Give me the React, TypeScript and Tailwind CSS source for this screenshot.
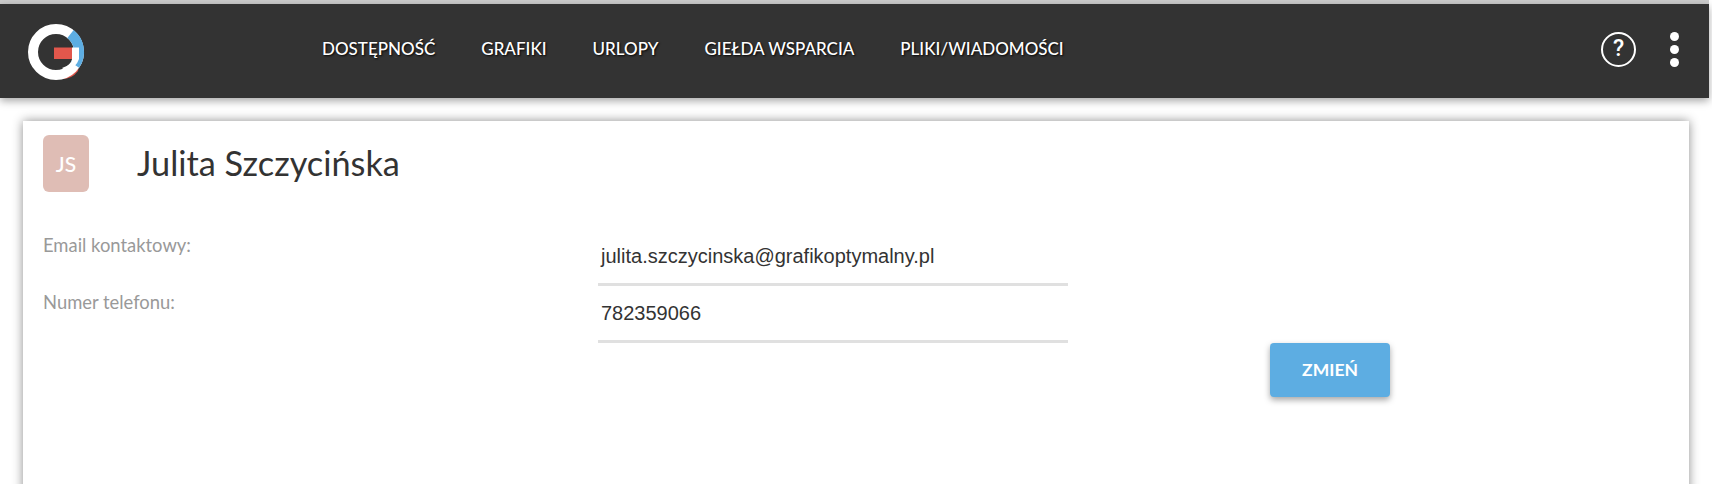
const navItems = ["DOSTĘPNOŚĆ", "GRAFIKI", "URLOPY", "GIEŁDA WSPARCIA", "PLIKI/WIADOMOŚCI"];

function Logo() {
  return (
    <svg width="60" height="60" viewBox="0 0 60 60" className="shrink-0">
      <path d="M36 58 Q46 58 52 50 L53 44 L38 50 Z" fill="#e2574c" />
      <circle cx="30" cy="31" r="23" fill="none" stroke="#fff" strokeWidth="10" />
      <path d="M44.5 13 A23 23 0 0 1 49 44" fill="none" stroke="#5dade2" strokeWidth="10" />
      <path d="M28 26.5 H46 V38 H28 Z" fill="#e2574c" />
      <path d="M46 26.5 H53 V38 Q50 47 40 50 L36 47 Q46 44 46 38 Z" fill="#fff" />
    </svg>
  );
}

function Field({ label, value }: { label: string; value: string }) {
  return (
    <div className="flex">
      <div className="w-[555px] pt-[4px] text-[18.4px] text-[#999] leading-6">{label}</div>
      <div className="w-[470px] h-[57px] border-b-[3px] border-[#e0e0e0] pl-[3px] pt-[13px] font-['Liberation_Sans',sans-serif] text-[20px] text-[#333] leading-7">
        {value}
      </div>
    </div>
  );
}

export default function App() {
  return (
    <div className="h-[484px] overflow-hidden bg-white font-['Lato',sans-serif]">
      <div className="h-[4px] bg-[#ccc] mr-[3px]" />
      <header className="mr-[3px] h-[94px] bg-[#333] flex items-center pl-[26px] pr-[30px] shadow-[0_3px_8px_rgba(0,0,0,0.35)] relative">
        <Logo />
        <nav className="ml-[236px] flex gap-[46px] pb-[4px]">
          {navItems.map((item) => (
            <a key={item} className="text-[17px] font-medium text-white [text-shadow:1px_1px_2px_rgba(0,0,0,0.9)]">
              {item}
            </a>
          ))}
        </nav>
        <div className="ml-auto flex items-center gap-[34px] pb-[4px]">
          <div className="w-[35px] h-[35px] rounded-full border-2 border-white flex items-center justify-center text-white font-['Roboto',sans-serif] font-medium text-[23px]">
            ?
          </div>
          <div className="flex flex-col gap-[4px]">
            <span className="w-[9px] h-[9px] rounded-full bg-white" />
            <span className="w-[9px] h-[9px] rounded-full bg-white" />
            <span className="w-[9px] h-[9px] rounded-full bg-white" />
          </div>
        </div>
      </header>
      <main className="mt-[23px] ml-[23px] w-[1666px] h-[400px] bg-white shadow-[0_0_10px_rgba(0,0,0,0.45)] pl-[20px] pt-[14px]">
        <div className="flex items-center h-[57px]">
          <div className="w-[46px] h-[57px] rounded-[6px] bg-[#dfbdb5] flex items-center justify-center text-white font-medium text-[21px]">
            JS
          </div>
          <h1 className="ml-[48px] text-[34.3px] text-[#333] leading-none">Julita Szczycińska</h1>
        </div>
        <div className="mt-[37px] flex flex-col">
          <Field label="Email kontaktowy:" value="julita.szczycinska@grafikoptymalny.pl" />
          <Field label="Numer telefonu:" value="782359066" />
        </div>
        <div className="ml-[1227px]">
          <button className="w-[120px] h-[54px] rounded-[4px] bg-[#5dade2] text-white font-bold text-[17.5px] shadow-[0_3px_6px_rgba(0,0,0,0.35)]">
            ZMIEŃ
          </button>
        </div>
      </main>
    </div>
  );
}
